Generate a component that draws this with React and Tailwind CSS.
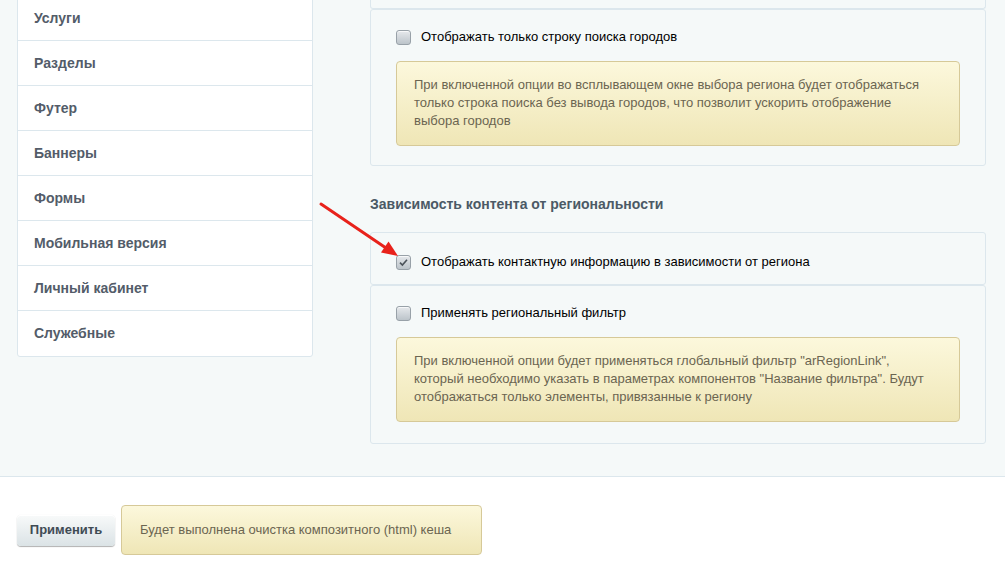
import React from "react";

const menu = [
  "Услуги",
  "Разделы",
  "Футер",
  "Баннеры",
  "Формы",
  "Мобильная версия",
  "Личный кабинет",
  "Служебные",
];

function Checkbox({ checked }) {
  return (
    <span className="w-[15px] h-[15px] shrink-0 rounded-[3px] border border-[#98a1a8] bg-gradient-to-b from-[#e6e9ec] to-[#bcc4ca] shadow-[inset_0_1px_0_rgba(255,255,255,0.7)] flex items-center justify-center">
      {checked && (
        <svg width="11" height="11" viewBox="0 0 11 11">
          <path d="M2 5.6 L4.4 8 L9 2.8" fill="none" stroke="#4b535a" strokeWidth="1.6" />
        </svg>
      )}
    </span>
  );
}

function Note({ children, className = "" }) {
  return (
    <div
      className={
        "border border-[#d6c998] rounded-[4px] bg-gradient-to-b from-[#fcf8dc] to-[#efe6b6] text-[#6b6551] text-[13px] leading-[18px] " +
        className
      }
    >
      {children}
    </div>
  );
}

function Option({ checked, label }) {
  return (
    <div className="flex items-center gap-[10px] h-[16px]">
      <Checkbox checked={checked} />
      <span className="text-[13px] text-black">{label}</span>
    </div>
  );
}

export default function App() {
  return (
    <div className="relative w-[1005px] h-[580px] overflow-hidden bg-white font-['Liberation_Sans',Arial,sans-serif]">
      <div className="h-[477px] bg-[#f5f9f9] border-b border-[#dce7ed] flex px-[17px]">
        <aside className="w-[296px] -mt-[5px] self-start bg-white border border-[#dce7ed] rounded-[3px]">
          {menu.map((item, i) => (
            <div
              key={item}
              className={
                "h-[45px] flex items-center pl-[16px] text-[14px] font-bold text-[#535c69] " +
                (i < menu.length - 1 ? "border-b border-[#dce7ed]" : "")
              }
            >
              {item}
            </div>
          ))}
        </aside>

        <main className="ml-[57px] w-[616px]">
          <div className="h-[9px] border-x border-b border-[#dce7ed] rounded-b-[3px]" />

          <div className="border border-[#dce7ed] rounded-[3px] px-[25px] pt-[19px] pb-[19px]">
            <Option label="Отображать только строку поиска городов" />
            <Note className="mt-[16px] pl-[17px] pt-[14px] pb-[15px]">
              При включенной опции во всплывающем окне выбора региона будет отображаться
              <br />
              только строка поиска без вывода городов, что позволит ускорить отображение
              <br />
              выбора городов
            </Note>
          </div>

          <h3 className="mt-[29px] mb-[19px] text-[14px] leading-[18px] font-bold text-[#4b5a66]">
            Зависимость контента от региональности
          </h3>

          <div className="border border-[#dce7ed] rounded-[3px] px-[25px] pt-[21px] pb-[14px]">
            <Option checked label="Отображать контактную информацию в зависимости от региона" />
          </div>

          <div className="border border-[#dce7ed] rounded-[3px] px-[25px] pt-[19px] pb-[21px]">
            <Option label="Применять региональный фильтр" />
            <Note className="mt-[16px] pl-[17px] pt-[14px] pb-[15px]">
              При включенной опции будет применяться глобальный фильтр "arRegionLink",
              <br />
              который необходимо указать в параметрах компонентов "Название фильтра". Будут
              <br />
              отображаться только элементы, привязанные к региону
            </Note>
          </div>
        </main>
      </div>

      <div className="flex items-center gap-[6px] pl-[17px] pt-[28px]">
        <button className="w-[98px] h-[31px] rounded-[4px] bg-gradient-to-b from-[#f8fafa] to-[#dbe3e6] shadow-[0_0_1px_rgba(0,0,0,0.11),0_1px_1px_rgba(0,0,0,0.3),inset_0_1px_#fff] text-[13px] font-bold text-[#3f4b54]">
          Применить
        </button>
        <Note className="w-[361px] h-[50px] flex items-center pl-[18px]">
          Будет выполнена очистка композитного (html) кеша
        </Note>
      </div>

      {/* red pointer */}
      <svg className="absolute inset-0 pointer-events-none" width="1005" height="580">
        <line x1="321" y1="204" x2="386" y2="248" stroke="#e8221b" strokeWidth="3" strokeLinecap="round" />
        <polygon points="398,256 381,252.5 388.5,241.5" fill="#e8221b" />
      </svg>
    </div>
  );
}
